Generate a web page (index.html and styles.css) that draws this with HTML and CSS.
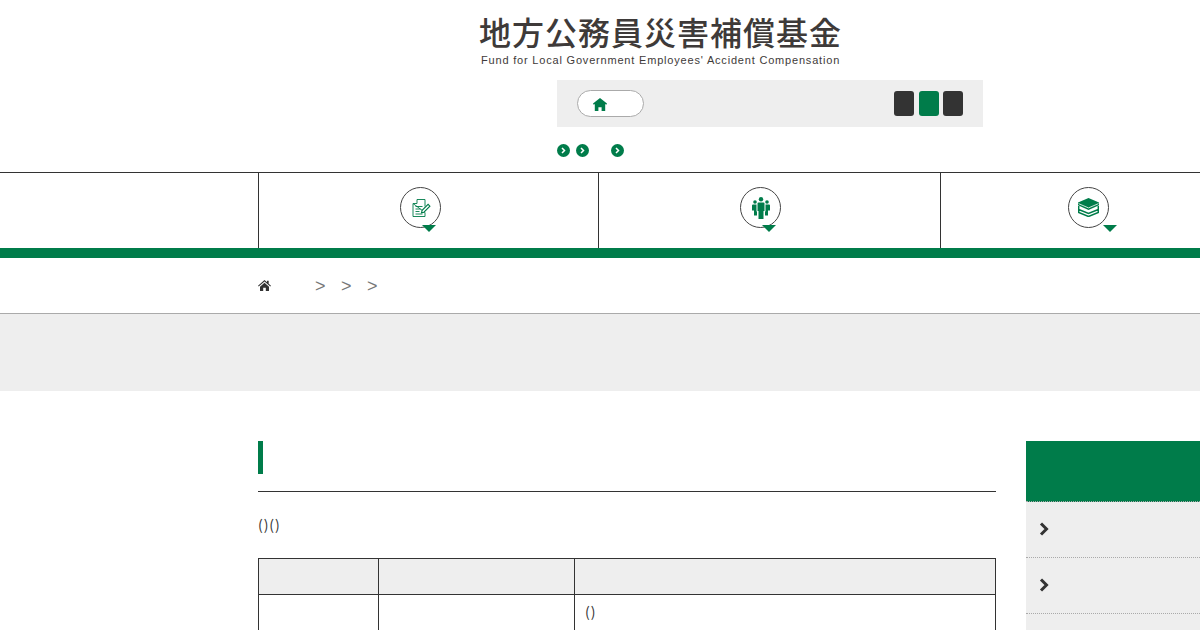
FILE: index.html
```html
<!DOCTYPE html>
<html lang="ja">
<head>
  <meta charset="UTF-8" />
  <meta name="viewport" content="width=device-width, initial-scale=1.0"/>
  <title>地方公務員災害補償基金</title>
  <link rel="stylesheet" href="styles.css">
</head>
<body>
  <header class="site-head">
    <a class="logo" href="#">
      <span class="logo-ja">地方公務員災害補償基金</span>
      <span class="logo-en">Fund for Local Government Employees' Accident Compensation</span>
    </a>

    <div class="tools">
      <a class="home-pill" href="#" aria-label="Home">
        <svg width="14" height="13" viewBox="0 0 14 13"><path fill="#007c4a" d="M7 0 14 5.600l-.7 1.100-1.100-.8V13H8.600V9.200H5.400V13H1.800V5.900L.7 6.700 0 5.600z"/></svg>
      </a>
      <div class="size-btns">
        <span class="size-btn"></span>
        <span class="size-btn is-active"></span>
        <span class="size-btn"></span>
      </div>
    </div>

    <div class="sub-links">
      <a class="dot-link" href="#"><svg width="7" height="7" viewBox="0 0 7 7"><path d="M2 1l2.500 2.500L2 6" fill="none" stroke="#fff" stroke-width="1.500"/></svg></a>
      <a class="dot-link" href="#"><svg width="7" height="7" viewBox="0 0 7 7"><path d="M2 1l2.500 2.500L2 6" fill="none" stroke="#fff" stroke-width="1.500"/></svg></a>
      <a class="dot-link dot-link-far" href="#"><svg width="7" height="7" viewBox="0 0 7 7"><path d="M2 1l2.500 2.500L2 6" fill="none" stroke="#fff" stroke-width="1.500"/></svg></a>
    </div>
  </header>

  <nav class="global-nav">
    <div class="nav-spacer"></div>
    <a class="nav-item" href="#">
      <span class="nav-icon">
        <svg width="20" height="20" viewBox="0 0 20 20" fill="none" stroke="#007c4a" stroke-width=".9">
          <path d="M6 1.500h8v7M14 14.500v4H2V5.500z"/>
          <path d="M6 1.500v4H2M4.500 8.500h7M4.500 11h5M4.500 13.500h4M4.500 16h7"/>
          <path d="M10.500 14.800l.6-2.400 6-6 1.800 1.800-6 6z" fill="#fff" stroke-width="1.100"/>
        </svg>
      </span>
      <span class="nav-arrow"></span>
    </a>
    <a class="nav-item nav-item-mid" href="#">
      <span class="nav-icon">
        <svg width="18" height="22" viewBox="0 0 18 22" fill="#007c4a">
          <circle cx="9" cy="2.200" r="2.200"/>
          <circle cx="3" cy="5" r="1.800"/>
          <circle cx="15" cy="5" r="1.800"/>
          <path d="M6.500 5.500h5a1 1 0 0 1 1 1V14h-1v8h-5v-8h-1V6.500a1 1 0 0 1 1-1z"/>
          <path d="M1 7.500h3.500V14.500h.5v4H2v-5H0V8.500a1 1 0 0 1 1-1zM13.500 7.500H17a1 1 0 0 1 1 1v5h-2v5h-3v-4h.5z"/>
        </svg>
      </span>
      <span class="nav-arrow"></span>
    </a>
    <a class="nav-item nav-item-last" href="#">
      <span class="nav-icon">
        <svg width="21" height="19" viewBox="0 0 21 19">
          <path fill="#007c4a" d="M10.500 0 21 4.500v2.800L10.500 12 0 7.300V4.500z"/>
          <path fill="none" stroke="#007c4a" stroke-width="1.500" d="M.7 8v6.500l9.800 4 9.800-4V8M.7 11.500l9.800 4 9.800-4"/>
          <path fill="none" stroke="#fff" stroke-width=".8" d="M.5 5.600l10 4.300 10-4.300"/>
        </svg>
      </span>
      <span class="nav-arrow"></span>
    </a>
  </nav>

  <div class="breadcrumb">
    <a class="crumb-home" href="#" aria-label="Home">
      <svg width="13" height="11" viewBox="0 0 13 11"><path fill="#333" d="M6.500 0 9 2.200V.8h1.700v2.900L13 5.700l-.7 .8-5.800-5-5.800 5-.7-.8zM2 6.700l4.500-3.900L11 6.700V11H7.800V7.800H5.200V11H2z"/></svg>
    </a>
    <span class="crumb-sep">&gt;</span>
    <span class="crumb-sep">&gt;</span>
    <span class="crumb-sep">&gt;</span>
  </div>

  <div class="page-band"></div>

  <div class="content">
    <main class="article">
      <h1 class="article-title"><span class="title-mark"></span></h1>
      <p class="lead">()()</p>
      <table class="info-table">
        <colgroup>
          <col class="col-a">
          <col class="col-b">
          <col>
        </colgroup>
        <thead>
          <tr><th></th><th></th><th></th></tr>
        </thead>
        <tbody>
          <tr><td></td><td></td><td>()</td></tr>
        </tbody>
      </table>
    </main>

    <aside class="side-menu">
      <div class="side-head"></div>
      <a class="side-row" href="#"><svg width="10" height="14" viewBox="0 0 10 14"><path d="M2 1.500 7.500 7 2 12.500" fill="none" stroke="#333" stroke-width="3"/></svg></a>
      <a class="side-row" href="#"><svg width="10" height="14" viewBox="0 0 10 14"><path d="M2 1.500 7.500 7 2 12.500" fill="none" stroke="#333" stroke-width="3"/></svg></a>
      <a class="side-row" href="#"></a>
    </aside>
  </div>
</body>
</html>
```

FILE: styles.css
```css
html, body {
  margin: 0;
  padding: 0;
  height: 630px;
  overflow: hidden;
  background: #fff;
  color: #333;
  font-family: "Noto Sans CJK JP", "Liberation Sans", sans-serif;
  font-size: 14px;
}

a {
  color: inherit;
  text-decoration: none;
}

/* Header */
.site-head {
  height: 172px;
  padding-left: 557px;
  box-sizing: border-box;
}

.logo {
  display: block;
  width: 366px;
  height: 80px;
  margin-left: -78px;
  padding-top: 11px;
  box-sizing: border-box;
}

.logo-ja {
  display: block;
  font-size: 32px;
  font-weight: 500;
  line-height: 40px;
  letter-spacing: 1px;
  color: #3e3a39;
  white-space: nowrap;
}

.logo-en {
  display: block;
  margin: 3px 0 0 2px;
  font-family: "Liberation Sans", sans-serif;
  font-size: 11px;
  line-height: 13px;
  letter-spacing: 0.81px;
  color: #3e3a39;
  white-space: nowrap;
}

.tools {
  display: flex;
  justify-content: space-between;
  align-items: center;
  width: 426px;
  height: 47px;
  padding: 0 20px;
  box-sizing: border-box;
  background: #eee;
}

.home-pill {
  display: flex;
  align-items: center;
  width: 67px;
  height: 27px;
  padding: 2px 0 0 15px;
  box-sizing: border-box;
  background: #fff;
  border: 1px solid #aaa;
  border-radius: 14px;
}

.size-btns {
  display: flex;
  gap: 5px;
}

.size-btn {
  width: 20px;
  height: 25px;
  background: #333;
  border-radius: 3px;
}

.size-btn:last-child {
  margin-left: -1px;
}

.size-btn.is-active {
  background: #007c4a;
}

.sub-links {
  display: flex;
  gap: 6px;
  padding-top: 17px;
}

.dot-link {
  display: flex;
  justify-content: center;
  align-items: center;
  width: 13px;
  height: 13px;
  background: #007c4a;
  border-radius: 50%;
}

.dot-link-far {
  margin-left: 16px;
}

/* Global nav */
.global-nav {
  display: grid;
  grid-template-columns: 258px 340px 342px 1fr;
  height: 75px;
  border-top: 1px solid #333;
  border-bottom: 10px solid #007c4a;
}

.nav-item {
  position: relative;
  border-left: 1px solid #333;
}

.nav-icon {
  display: flex;
  justify-content: center;
  align-items: center;
  width: 39px;
  height: 39px;
  margin: 14px auto 0;
  border: 1px solid #444;
  border-radius: 50%;
  transform: translateX(-8px);
}

.nav-item-mid .nav-icon {
  transform: translateX(-9px);
}

.nav-item-last .nav-icon {
  margin-left: 127px;
  transform: none;
}

.nav-arrow {
  position: absolute;
  top: 52px;
  left: 50%;
  margin-left: -7px;
  width: 0;
  height: 0;
  border-left: 7px solid transparent;
  border-right: 7px solid transparent;
  border-top: 7px solid #007c4a;
}

.nav-item-mid .nav-arrow {
  margin-left: -8px;
}

.nav-item-last .nav-arrow {
  left: 162px;
  margin-left: 0;
}

/* Breadcrumb */
.breadcrumb {
  display: flex;
  align-items: center;
  gap: 17px;
  height: 55px;
  padding-left: 258px;
  border-bottom: 1px solid #aaa;
  color: #777;
  font-family: "Liberation Sans", sans-serif;
}

.crumb-home {
  display: flex;
  margin-right: 27px;
}

.crumb-sep {
  width: 9px;
  font-size: 18px;
  line-height: 1;
}

.page-band {
  height: 77px;
  background: #eee;
}

/* Content */
.content {
  display: flex;
  gap: 30px;
  padding: 50px 0 0 258px;
}

.article {
  flex: none;
  width: 738px;
}

.article-title {
  height: 50px;
  margin: 0;
  border-bottom: 1px solid #333;
}

.title-mark {
  display: block;
  width: 5px;
  height: 33px;
  background: #007c4a;
}

.lead {
  margin: 23px 0 25px;
  line-height: 18px;
  letter-spacing: 0.9px;
}

.info-table {
  width: 100%;
  table-layout: fixed;
  border-collapse: collapse;
}

.col-a {
  width: 120px;
}

.col-b {
  width: 196px;
}

.info-table th,
.info-table td {
  border: 1px solid #333;
  padding: 7px 10px 9px;
  text-align: left;
  font-weight: normal;
  vertical-align: top;
  line-height: 18px;
  letter-spacing: 0.9px;
}

.info-table th {
  height: 19px;
  background: #eee;
}

.info-table td {
  height: 80px;
}

.side-menu {
  flex: 1;
}

.side-head {
  height: 60px;
  background: #007c4a;
  border-bottom: 1px dotted #aaa;
}

.side-row {
  display: flex;
  align-items: center;
  height: 53px;
  padding: 0 0 2px 13px;
  background: #eee;
  border-bottom: 1px dotted #aaa;
}
```
